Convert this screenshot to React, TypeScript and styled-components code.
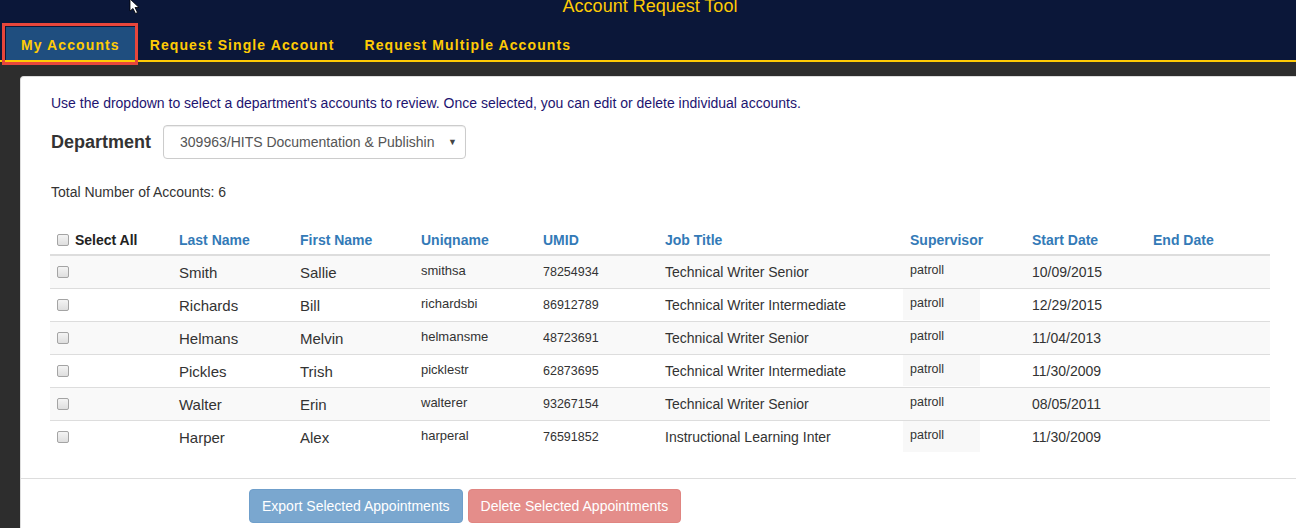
import styled, { createGlobalStyle } from "styled-components";

const GlobalStyle = createGlobalStyle`
  html, body {
    margin: 0;
    padding: 0;
    background: #2d2d2d;
    font-family: "Liberation Sans", Arial, Helvetica, sans-serif;
    overflow: hidden;
  }
  * { box-sizing: border-box; }
`;

const Page = styled.div`
  position: relative;
  width: 1296px;
  height: 528px;
  overflow: hidden;
  background: #2d2d2d;
`;

const Header = styled.header`
  background: #0b1739;
  border-bottom: 2px solid #ffcb05;
  height: 62px;
  display: flex;
  flex-direction: column;
`;

const Title = styled.h1`
  margin: -4px 0 0;
  text-align: center;
  font-size: 18px;
  line-height: 20px;
  font-weight: normal;
  color: #ffcb05;
  padding-left: 4px;
`;

const Nav = styled.nav`
  display: flex;
  margin-top: 11px;
  padding-left: 6px;
  height: 33px;
`;

const Tab = styled.a<{ $active?: boolean }>`
  display: flex;
  align-items: center;
  padding: 2px 15px 0;
  font-size: 14px;
  font-weight: bold;
  letter-spacing: 1.1px;
  color: #ffcb05;
  background: ${(p) => (p.$active ? "#1f4e7f" : "transparent")};
  text-decoration: none;
  cursor: pointer;
`;

const Highlight = styled.div`
  position: absolute;
  left: 2px;
  top: 23px;
  width: 136px;
  height: 42px;
  border: 3px solid #e8463b;
  pointer-events: none;
`;

const Cursor = styled.svg`
  position: absolute;
  left: 129px;
  top: -1px;
`;

const Body = styled.div`
  padding: 14px 0 0 20px;
`;

const Panel = styled.section`
  background: #fff;
  border: 1px solid #ddd;
  border-right: none;
  border-radius: 4px 0 0 0;
  height: 480px;
`;

const Content = styled.div`
  padding: 18px 0 0 30px;
`;

const Intro = styled.p`
  margin: 0;
  font-size: 14px;
  color: #1d1470;
`;

const DeptRow = styled.div`
  display: flex;
  align-items: center;
  margin-top: 14px;
  gap: 12px;
`;

const DeptLabel = styled.label`
  font-size: 18px;
  font-weight: bold;
  color: #333;
`;

const Select = styled.div`
  width: 303px;
  height: 34px;
  border: 1px solid #ccc;
  border-radius: 4px;
  display: flex;
  align-items: center;
  justify-content: space-between;
  padding: 0 8px 0 16px;
  font-size: 14px;
  color: #555;
  box-shadow: inset 0 1px 1px rgba(0, 0, 0, 0.075);
`;

const Caret = styled.span`
  font-size: 9px;
  color: #444;
`;

const Total = styled.p`
  margin: 25px 0 0;
  font-size: 14px;
  color: #333;
`;

const Table = styled.table`
  margin: 27px 0 0 -1px;
  width: 1220px;
  border-collapse: collapse;
  table-layout: fixed;
`;

const Th = styled.th<{ $w: number }>`
  width: ${(p) => p.$w}px;
  text-align: left;
  font-size: 14px;
  font-weight: bold;
  color: #337ab7;
  padding: 5px 8px 6px;
  border-bottom: 2px solid #ddd;
  white-space: nowrap;
`;

const SelectAll = styled.span`
  display: flex;
  align-items: center;
  gap: 6px;
  color: #222;
`;

const Tr = styled.tr<{ $striped: boolean; $last?: boolean }>`
  background: ${(p) => (p.$striped ? "#f9f9f9" : "#fff")};
  border-bottom: ${(p) => (p.$last ? "none" : "1px solid #ddd")};
  height: 33px;
`;

const Td = styled.td<{ $size: number; $lift?: boolean; $drop?: boolean }>`
  padding: ${(p) => (p.$drop ? "2px 8px 0" : p.$lift ? "0 8px 2px" : "0 8px")};
  font-size: ${(p) => p.$size}px;
  color: #333;
  white-space: nowrap;
  vertical-align: middle;
`;

const Box = styled.input.attrs({ type: "checkbox" })`
  appearance: none;
  width: 12px;
  height: 12px;
  margin: 0 0 0 -1px;
  border: 1px solid #a4a4a4;
  border-radius: 2px;
  background: linear-gradient(#f4f4f4, #dedede);
  display: block;
`;

const SupCell = styled.span<{ $boxed: boolean }>`
  display: inline-block;
  margin-left: -7px;
  padding: 7px 36px 10px 7px;
  background: ${(p) => (p.$boxed ? "#f8f8f8" : "transparent")};
  font-size: 12.5px;
`;

const Footer = styled.div`
  margin-top: 25px;
  border-top: 1px solid #ddd;
  padding: 10px 0 0 228px;
  display: flex;
  gap: 5px;
`;

const Button = styled.button<{ $kind: "export" | "delete" }>`
  font-family: inherit;
  font-size: 14px;
  color: #fff;
  border: 1px solid ${(p) => (p.$kind === "export" ? "#6f9fcb" : "#e08581")};
  background: ${(p) => (p.$kind === "export" ? "#7aa7cf" : "#e48d8a")};
  border-radius: 4px;
  padding: 0 12px;
  height: 34px;
`;

type Account = {
  last: string;
  first: string;
  uniq: string;
  umid: string;
  job: string;
  start: string;
};

const accounts: Account[] = [
  { last: "Smith", first: "Sallie", uniq: "smithsa", umid: "78254934", job: "Technical Writer Senior", start: "10/09/2015" },
  { last: "Richards", first: "Bill", uniq: "richardsbi", umid: "86912789", job: "Technical Writer Intermediate", start: "12/29/2015" },
  { last: "Helmans", first: "Melvin", uniq: "helmansme", umid: "48723691", job: "Technical Writer Senior", start: "11/04/2013" },
  { last: "Pickles", first: "Trish", uniq: "picklestr", umid: "62873695", job: "Technical Writer Intermediate", start: "11/30/2009" },
  { last: "Walter", first: "Erin", uniq: "walterer", umid: "93267154", job: "Technical Writer Senior", start: "08/05/2011" },
  { last: "Harper", first: "Alex", uniq: "harperal", umid: "76591852", job: "Instructional Learning Inter", start: "11/30/2009" },
];

const columns = [
  { label: "Last Name", w: 121 },
  { label: "First Name", w: 121 },
  { label: "Uniqname", w: 122 },
  { label: "UMID", w: 122 },
  { label: "Job Title", w: 245 },
  { label: "Supervisor", w: 122 },
  { label: "Start Date", w: 121 },
  { label: "End Date", w: 125 },
];

export default function App() {
  return (
    <Page>
      <GlobalStyle />
      <Header>
        <Title>Account Request Tool</Title>
        <Nav>
          <Tab $active>My Accounts</Tab>
          <Tab>Request Single Account</Tab>
          <Tab>Request Multiple Accounts</Tab>
        </Nav>
      </Header>
      <Highlight />
      <Cursor width="14" height="16" viewBox="0 0 14 16">
        <path d="M1 0 L1 12 L4 9.5 L6.5 14.5 L8.5 13.5 L6 8.5 L10 8.5 Z" fill="#fff" stroke="#000" strokeWidth="0.8" />
      </Cursor>
      <Body>
        <Panel>
          <Content>
            <Intro>
              Use the dropdown to select a department's accounts to review. Once selected, you can edit or delete individual accounts.
            </Intro>
            <DeptRow>
              <DeptLabel>Department</DeptLabel>
              <Select>
                309963/HITS Documentation &amp; Publishin
                <Caret>▼</Caret>
              </Select>
            </DeptRow>
            <Total>Total Number of Accounts: 6</Total>
            <Table>
              <thead>
                <tr>
                  <Th $w={121}>
                    <SelectAll>
                      <Box />
                      Select All
                    </SelectAll>
                  </Th>
                  {columns.map((c) => (
                    <Th key={c.label} $w={c.w}>
                      {c.label}
                    </Th>
                  ))}
                </tr>
              </thead>
              <tbody>
                {accounts.map((a, i) => (
                  <Tr key={a.uniq} $striped={i % 2 === 0} $last={i === accounts.length - 1}>
                    <Td $size={13}>
                      <Box />
                    </Td>
                    <Td $size={15} $drop>{a.last}</Td>
                    <Td $size={15} $drop>{a.first}</Td>
                    <Td $size={13} $lift>{a.uniq}</Td>
                    <Td $size={12.5}>{a.umid}</Td>
                    <Td $size={14}>{a.job}</Td>
                    <Td $size={12.5}>
                      <SupCell $boxed={i % 2 === 1}>patroll</SupCell>
                    </Td>
                    <Td $size={14}>{a.start}</Td>
                    <Td $size={14}></Td>
                  </Tr>
                ))}
              </tbody>
            </Table>
          </Content>
          <Footer>
            <Button $kind="export">Export Selected Appointments</Button>
            <Button $kind="delete">Delete Selected Appointments</Button>
          </Footer>
        </Panel>
      </Body>
    </Page>
  );
}
